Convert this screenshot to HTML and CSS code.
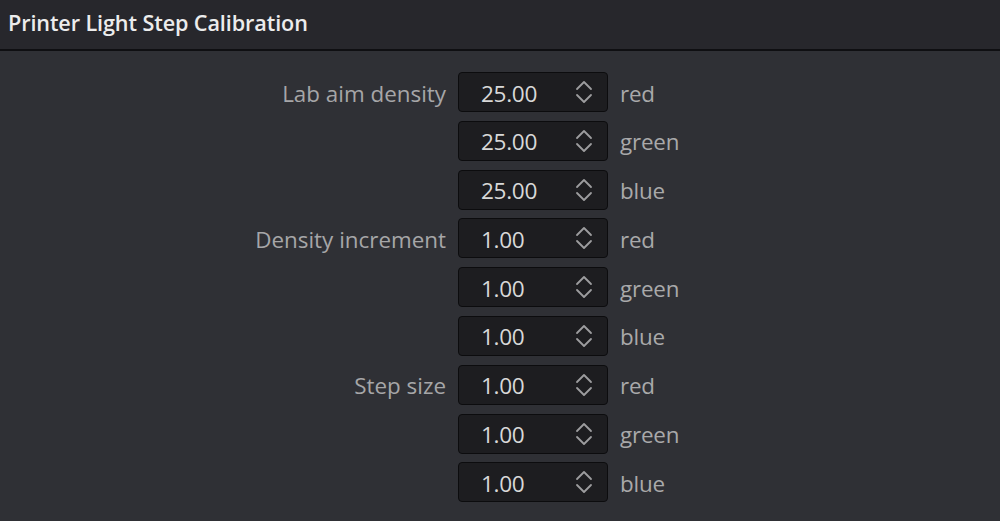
FILE: index.html
```
<!DOCTYPE html>
<html lang="en">
<head>
  <meta charset="UTF-8" />
  <title>Printer Light Step Calibration</title>
  <link rel="stylesheet" href="styles.css">
</head>
<body>

  <div class="panel-header">
    <h1>Printer Light Step Calibration</h1>
  </div>

  <div class="panel-body">
    <div class="calib-grid">
      <label class="row-label">Lab aim density</label>
      <div class="spin"><span class="spin-value">25.00</span><svg class="chev" viewBox="0 0 18 30"><path d="M2 12 L9 5 L16 12 M2 18 L9 25 L16 18"/></svg></div>
      <span class="channel">red</span>

      <span></span>
      <div class="spin"><span class="spin-value">25.00</span><svg class="chev" viewBox="0 0 18 30"><path d="M2 12 L9 5 L16 12 M2 18 L9 25 L16 18"/></svg></div>
      <span class="channel">green</span>

      <span></span>
      <div class="spin"><span class="spin-value">25.00</span><svg class="chev" viewBox="0 0 18 30"><path d="M2 12 L9 5 L16 12 M2 18 L9 25 L16 18"/></svg></div>
      <span class="channel">blue</span>

      <label class="row-label">Density increment</label>
      <div class="spin"><span class="spin-value">1.00</span><svg class="chev" viewBox="0 0 18 30"><path d="M2 12 L9 5 L16 12 M2 18 L9 25 L16 18"/></svg></div>
      <span class="channel">red</span>

      <span></span>
      <div class="spin"><span class="spin-value">1.00</span><svg class="chev" viewBox="0 0 18 30"><path d="M2 12 L9 5 L16 12 M2 18 L9 25 L16 18"/></svg></div>
      <span class="channel">green</span>

      <span></span>
      <div class="spin"><span class="spin-value">1.00</span><svg class="chev" viewBox="0 0 18 30"><path d="M2 12 L9 5 L16 12 M2 18 L9 25 L16 18"/></svg></div>
      <span class="channel">blue</span>

      <label class="row-label">Step size</label>
      <div class="spin"><span class="spin-value">1.00</span><svg class="chev" viewBox="0 0 18 30"><path d="M2 12 L9 5 L16 12 M2 18 L9 25 L16 18"/></svg></div>
      <span class="channel">red</span>

      <span></span>
      <div class="spin"><span class="spin-value">1.00</span><svg class="chev" viewBox="0 0 18 30"><path d="M2 12 L9 5 L16 12 M2 18 L9 25 L16 18"/></svg></div>
      <span class="channel">green</span>

      <span></span>
      <div class="spin"><span class="spin-value">1.00</span><svg class="chev" viewBox="0 0 18 30"><path d="M2 12 L9 5 L16 12 M2 18 L9 25 L16 18"/></svg></div>
      <span class="channel">blue</span>
    </div>
  </div>

</body>
</html>
```

FILE: styles.css
```
* {
  box-sizing: border-box;
}

html, body {
  margin: 0;
  height: 100%;
}

body {
  font-family: 'Open Sans', 'Noto Sans', sans-serif;
  background: #2f3035;
  color: #a9a9aa;
  overflow: hidden;
  display: flex;
  flex-direction: column;
}

.panel-header {
  flex: none;
  height: 51px;
  background: #27272c;
  border-bottom: 2px solid #0f0f12;
  display: flex;
  align-items: center;
  padding-left: 8px;
  padding-bottom: 4px;
}

.panel-header h1 {
  margin: 0;
  font-size: 21.6px;
  font-weight: 600;
  color: #ececec;
  letter-spacing: -0.1px;
}

.panel-body {
  flex: 1;
  padding-top: 21px;
  background: #2f3035;
}

.calib-grid {
  display: grid;
  grid-template-columns: 446px 150px 1fr;
  grid-auto-rows: 40px;
  column-gap: 12px;
  row-gap: 8.8px;
  align-items: center;
}

.row-label {
  text-align: right;
  font-size: 22.4px;
  letter-spacing: 0;
  color: #a6a6a8;
  padding-top: 2px;
}

.channel {
  font-size: 22.4px;
  letter-spacing: -0.2px;
  color: #a9a9aa;
  padding-top: 2px;
}

.spin {
  height: 40px;
  display: flex;
  align-items: center;
  justify-content: space-between;
  background: #1d1d20;
  border: 1px solid #0c0c0e;
  border-radius: 4px;
  padding: 2px 14px 0 22px;
}

.spin-value {
  font-size: 22.6px;
  letter-spacing: -0.3px;
  color: #d8d8d8;
}

.chev {
  width: 18px;
  height: 30px;
  fill: none;
  stroke: #9d9d9f;
  stroke-width: 1.8;
  stroke-linecap: round;
  stroke-linejoin: round;
  margin-top: -2px;
}
```
